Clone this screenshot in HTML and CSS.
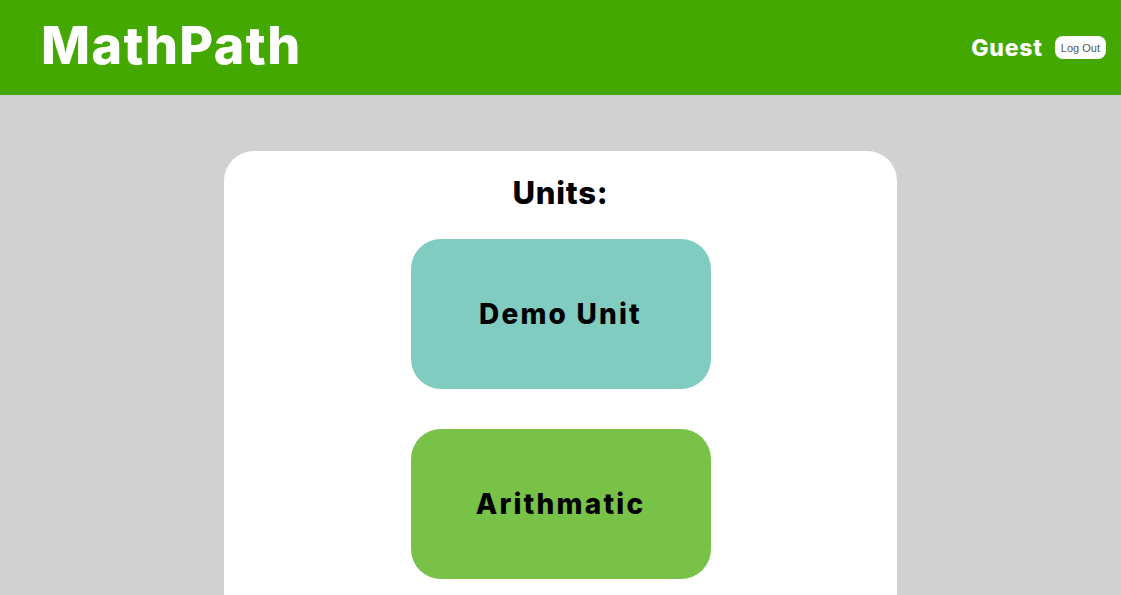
FILE: index.html
```html
<!DOCTYPE html>
<html lang="en">
<head>
<meta charset="utf-8">
<title>MathPath</title>
<link rel="stylesheet" href="styles.css">
</head>
<body>
<header class="topbar">
  <div class="brand">MathPath</div>
  <div class="user">
    <span class="user-name">Guest</span>
    <button class="logout">Log Out</button>
  </div>
</header>
<main class="page">
  <section class="card">
    <h2 class="card-title">Units:</h2>
    <div class="unit-list">
      <a class="unit unit-demo">Demo Unit</a>
      <a class="unit unit-arith">Arithmatic</a>
    </div>
  </section>
</main>
</body>
</html>
```

FILE: styles.css
```css
html, body {
  margin: 0;
  padding: 0;
}
body {
  background: #d1d1d1;
  font-family: "Inter", "Open Sans", sans-serif;
  height: 595px;
  overflow: hidden;
}
.topbar {
  height: 95px;
  background: #43a800;
  display: flex;
  align-items: center;
  justify-content: space-between;
  padding: 0 15px 0 41px;
  box-sizing: border-box;
}
.brand {
  color: #fff;
  font-weight: 800;
  font-size: 52px;
  letter-spacing: 1.4px;
  line-height: 1;
  margin-top: -4px;
}
.user {
  display: flex;
  align-items: center;
  gap: 12px;
}
.user-name {
  color: #fff;
  font-weight: 800;
  font-size: 23px;
  letter-spacing: 0.8px;
}
.logout {
  background: #fff;
  border: none;
  border-radius: 8px;
  height: 23px;
  padding: 0 6px;
  font-family: "Liberation Sans", Arial, sans-serif;
  font-size: 11px;
  color: #555;
}
.page {
  display: flex;
  justify-content: center;
  padding-top: 56px;
}
.card {
  width: 673px;
  background: #fff;
  border-radius: 30px;
  height: 600px;
  display: flex;
  flex-direction: column;
  align-items: center;
}
.card-title {
  margin: 22px 0 0;
  font-size: 31px;
  font-weight: 800;
  line-height: 40px;
  letter-spacing: 0.8px;
  color: #000;
}
.unit-list {
  margin-top: 26px;
  display: flex;
  flex-direction: column;
  gap: 40px;
}
.unit {
  width: 300px;
  height: 150px;
  border-radius: 30px;
  display: flex;
  align-items: center;
  justify-content: center;
  font-size: 28px;
  font-weight: 800;
  color: #000;
}
.unit-demo {
  background: #80ccc1;
  letter-spacing: 2.2px;
}
.unit-arith {
  background: #78c247;
  letter-spacing: 2.2px;
}
```
